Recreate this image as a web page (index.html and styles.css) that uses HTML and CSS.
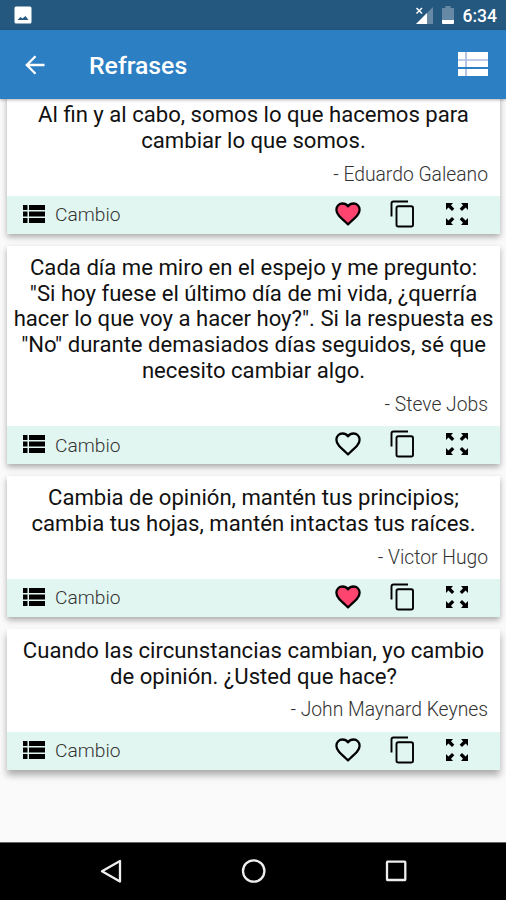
FILE: index.html
```html
<!DOCTYPE html>
<html lang="es">
<head>
<meta charset="utf-8">
<title>Refrases</title>
<link rel="stylesheet" href="styles.css">
</head>
<body>
<svg class="defs" width="0" height="0" aria-hidden="true">
  <symbol id="list" viewBox="0 0 22 18"><path d="M0 0H4.500V5H0zM6 0H22V5H6zM0 6.500H4.500V11.500H0zM6 6.500H22V11.500H6zM0 13H4.500V18H0zM6 13H22V18H6z"/></symbol>
  <symbol id="heart" viewBox="0 0 28 28"><path d="M14 24.300 12 22.500C5.700 16.900 2.400 13.900 2.400 9.700 2.400 6.200 5.100 3.500 8.500 3.500c2.200 0 4.200 1.100 5.500 2.800 1.300-1.700 3.300-2.800 5.500-2.800 3.400 0 6.100 2.700 6.100 6.200 0 4.200-3.300 7.200-9.600 12.800z" stroke="#000" stroke-width="2.300" stroke-linejoin="round"/></symbol>
  <symbol id="copy" viewBox="0 0 28 30"><path d="M2.500 17.500V4.500Q2.500 2.500 4.500 2.500H19M9.300 7.300H22.200Q24 7.300 24 9.100V25.700Q24 27.500 22.200 27.500H9.300Q7.500 27.500 7.500 25.700V9.100Q7.500 7.300 9.300 7.300z" fill="none" stroke="#000" stroke-width="1.900"/></symbol>
  <symbol id="expand" viewBox="0 0 24 24"><path d="M1 1H8L6 3.200 9.300 6.700 7 9 3.400 5.600 1 8zM23 1V8L20.600 5.600 17 9 14.700 6.700 18 3.200 16 1zM1 23V16L3.400 18.400 7 15 9.300 17.300 6 20.800 8 23zM23 23H16L18 20.800 14.700 17.300 17 15 20.600 18.400 23 16z"/></symbol>
</svg>
<div class="screen">
  <header class="status">
    <svg class="photo" viewBox="0 0 18 18"><rect x=".5" y=".5" width="17" height="17" rx="1.500" fill="#fff"/><path d="M3.500 14 6.500 11 8.500 12.500 11.500 10 14.500 14z" fill="#25587f"/></svg>
    <span class="spacer"></span>
    <svg class="signal" viewBox="0 0 19 19"><path d="M18 1V18H1z" fill="#6689a5"/><path d="M12 7V18H1z" fill="#fff"/><path d="M1.500 2 7 7.500M7 2 1.500 7.500" stroke="#25587f" stroke-width="4"/><path d="M1.500 2 7 7.500M7 2 1.500 7.500" stroke="#fff" stroke-width="1.500"/></svg>
    <svg class="battery" viewBox="0 0 12 19"><path d="M0 3Q0 2 1 2H3.500V0H8.500V2H11Q12 2 12 3V14H0z" fill="#6689a5"/><path d="M0 14H12V17Q12 18 11 18H1Q0 18 0 17z" fill="#fff"/></svg>
    <span class="clock">6:34</span>
  </header>
  <div class="toolbar">
    <svg class="back" viewBox="0 0 20 20"><path d="M19.500 10H2M10.500 1.300 1.800 10 10.500 18.700" fill="none" stroke="#fff" stroke-width="2.300"/></svg>
    <h1>Refrases</h1>
    <svg class="menu" viewBox="0 0 30 24"><path d="M0 0H30V15H0z" fill="#fff"/><path d="M0 17H30V24H0z" fill="#fff"/><path d="M8 0V15M8 17V24M0 8H30" stroke="#a9bde0" stroke-width="1.700"/></svg>
  </div>
  <main class="feed">
    <article class="card">
      <p class="quote">Al fin y al cabo, somos lo que hacemos para<br>cambiar lo que somos.</p>
      <p class="author">- Eduardo Galeano</p>
      <footer><svg class="list"><use href="#list"/></svg><span class="tag">Cambio</span><svg class="heart liked"><use href="#heart"/></svg><svg class="copy"><use href="#copy"/></svg><svg class="expand"><use href="#expand"/></svg></footer>
    </article>
    <article class="card">
      <p class="quote">Cada día me miro en el espejo y me pregunto:<br>"Si hoy fuese el último día de mi vida, ¿querría<br>hacer lo que voy a hacer hoy?". Si la respuesta es<br>"No" durante demasiados días seguidos, sé que<br>necesito cambiar algo.</p>
      <p class="author">- Steve Jobs</p>
      <footer><svg class="list"><use href="#list"/></svg><span class="tag">Cambio</span><svg class="heart"><use href="#heart"/></svg><svg class="copy"><use href="#copy"/></svg><svg class="expand"><use href="#expand"/></svg></footer>
    </article>
    <article class="card">
      <p class="quote">Cambia de opinión, mantén tus principios;<br>cambia tus hojas, mantén intactas tus raíces.</p>
      <p class="author">- Victor Hugo</p>
      <footer><svg class="list"><use href="#list"/></svg><span class="tag">Cambio</span><svg class="heart liked"><use href="#heart"/></svg><svg class="copy"><use href="#copy"/></svg><svg class="expand"><use href="#expand"/></svg></footer>
    </article>
    <article class="card">
      <p class="quote">Cuando las circunstancias cambian, yo cambio<br>de opinión. ¿Usted que hace?</p>
      <p class="author">- John Maynard Keynes</p>
      <footer><svg class="list"><use href="#list"/></svg><span class="tag">Cambio</span><svg class="heart"><use href="#heart"/></svg><svg class="copy"><use href="#copy"/></svg><svg class="expand"><use href="#expand"/></svg></footer>
    </article>
  </main>
  <nav class="navbar">
    <svg viewBox="0 0 26 26"><path d="M22 3V23.500L4 13.200z"/></svg>
    <svg viewBox="0 0 26 26"><circle cx="12.700" cy="13" r="10.700"/></svg>
    <svg viewBox="0 0 26 26"><rect x="4" y="3.700" width="18.300" height="18.300" rx=".5"/></svg>
  </nav>
</div>
</body>
</html>
```
FILE: styles.css
```css
* { box-sizing: border-box; }
body { margin: 0; font-family: Roboto, sans-serif; }
p, h1 { margin: 0; }
svg { display: block; flex: none; }
.defs { position: absolute; }
.screen { width: 506px; height: 900px; display: flex; flex-direction: column; overflow: hidden; background: #fafafa; }
.status { height: 30px; flex: none; display: flex; align-items: center; padding: 0 9px 0 14px; background: #25587f; color: #fff; }
.photo { width: 18px; height: 18px; }
.spacer { flex: 1; }
.signal { width: 19px; height: 19px; margin-right: 8px; }
.battery { width: 12px; height: 19px; margin-right: 9px; }
.clock { font-size: 17.5px; font-weight: 500; line-height: 30px; padding-top: 2px; }
.toolbar { height: 69px; flex: none; display: flex; align-items: center; padding: 0 18px 0 25px; background: #2c7fc3; color: #fff; z-index: 1; box-shadow: 0 1px 3px rgba(0, 0, 0, .3); }
.back { width: 20px; height: 20px; }
.toolbar h1 { flex: 1; margin-left: 44px; padding-top: 2px; font-size: 24.8px; font-weight: 500; line-height: 30px; }
.menu { width: 30px; height: 24px; margin-bottom: 1px; }
.feed { flex: 1; min-height: 0; overflow: hidden; padding: 0 6px 0 7px; display: flex; flex-direction: column; gap: 11.8px; }
.card { flex: none; background: #fff; box-shadow: 0 3px 6px rgba(0, 0, 0, .32); }
.card:first-child { margin-top: -6px; }
.card:last-child { box-shadow: 0 5px 7px rgba(0, 0, 0, .32); }
.quote { padding-top: 9px; text-align: center; font-size: 22.120px; line-height: 25.8px; color: #111; white-space: nowrap; }
.author { height: 42.400px; padding: 9px 12px 0 0; text-align: right; font-size: 19.3px; font-weight: 300; line-height: 24px; color: #333; }
.card footer { height: 38px; display: flex; align-items: center; padding: 0 31px 2px 16px; background: #e2f6f1; }
.list { width: 22px; height: 18px; }
.tag { flex: 1; margin-left: 10px; padding-top: 3px; font-size: 19.2px; font-weight: 300; line-height: 24px; color: #333; }
.heart { width: 28px; height: 28px; fill: none; margin-right: 27px; }
.heart.liked { fill: #ff4470; }
.copy { width: 28px; height: 30px; margin-right: 28px; }
.expand { width: 24px; height: 24px; }
.navbar { height: 58px; flex: none; display: flex; align-items: center; justify-content: space-between; padding: 0 97px 1px 98px; background: #000; border-top: 1px solid #666; }
.navbar svg { width: 26px; height: 26px; fill: none; stroke: #eee; stroke-width: 2.300; stroke-linejoin: round; }
```
